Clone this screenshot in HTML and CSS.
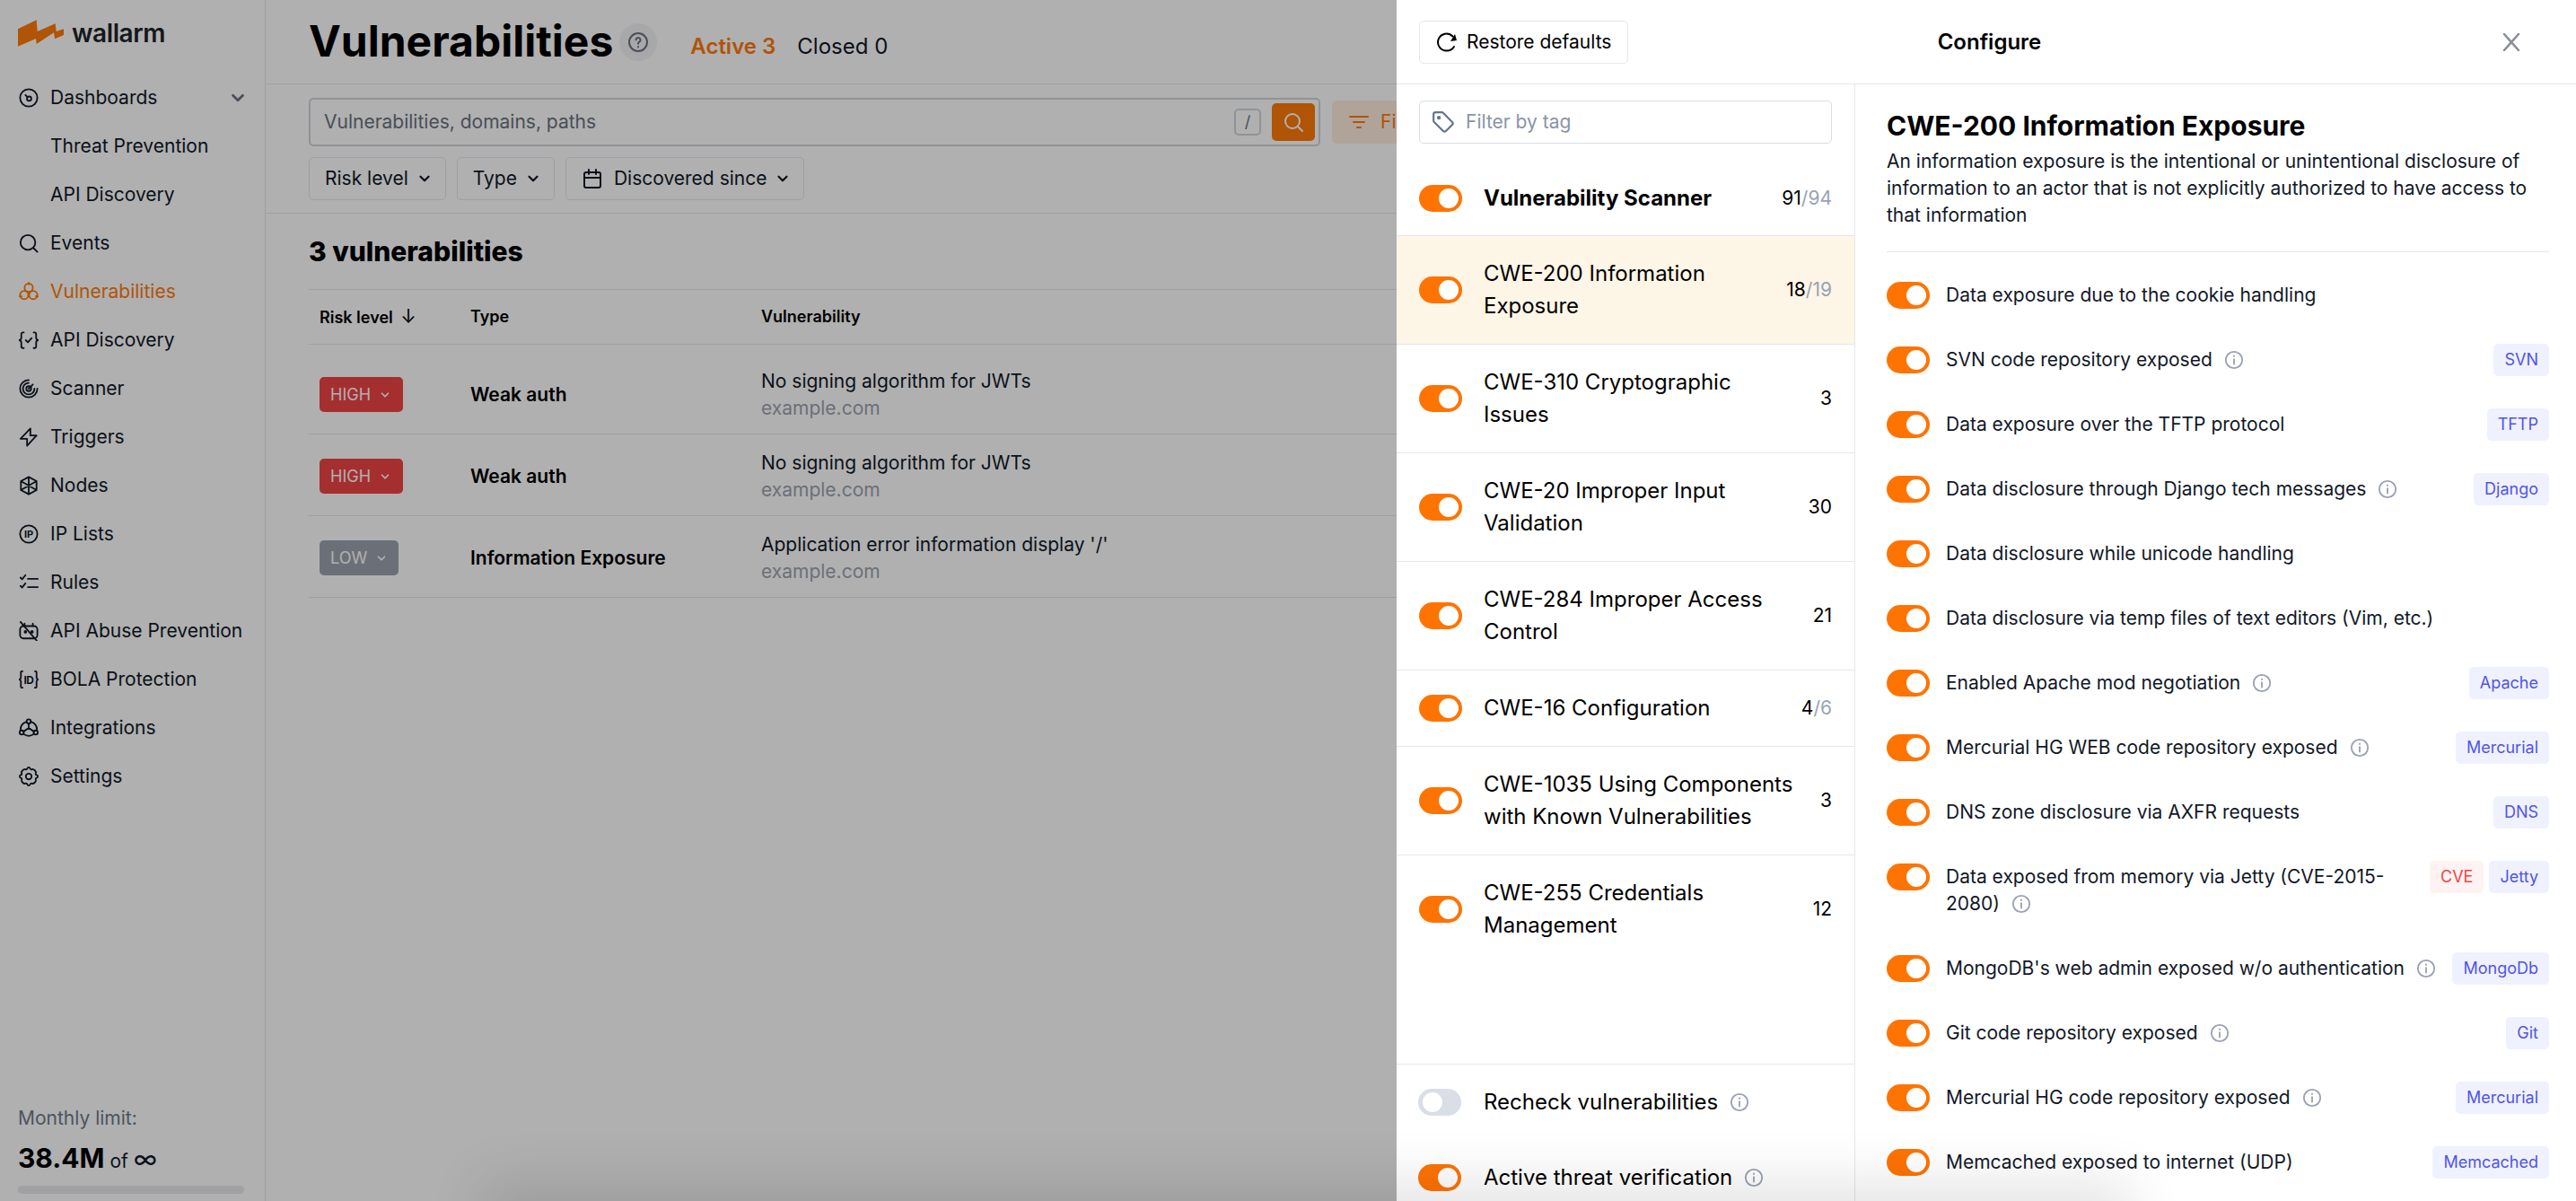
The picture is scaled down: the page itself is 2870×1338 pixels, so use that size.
FILE: index.html
```html
<!DOCTYPE html>
<html lang="en">
<head>
<meta charset="utf-8">
<title>Wallarm - Vulnerabilities</title>
<link rel="stylesheet" href="styles.css">
</head>
<body>
<svg class="sprite" aria-hidden="true">
  <symbol id="i-info" viewBox="0 0 24 24"><circle cx="12" cy="12" r="10"/><path d="M12 11v6M12 7v.6"/></symbol>
  <symbol id="i-chev" viewBox="0 0 24 24"><path d="M6 9l6 6 6-6"/></symbol>
</svg>

<aside class="sidebar">
  <div class="logo">
    <svg class="logo-mark" viewBox="30 30 153 88"><path d="M30 60L92 30L95 68L155 42L158 68L183 60V80L153 93L150 72L92 110L90 92L30 118Z"/></svg>
    <span class="logo-text">wallarm</span>
  </div>
  <nav class="nav">
    <a class="nav-item"><svg class="nav-icon" viewBox="0 0 24 24"><circle cx="12" cy="12" r="10.5"/><circle cx="12.5" cy="13" r="2.6"/><path d="M10.5 11L8 8.5"/></svg>Dashboards<svg class="nav-caret"><use href="#i-chev"/></svg></a>
    <a class="nav-item"><span class="nav-icon"></span>Threat Prevention</a>
    <a class="nav-item"><span class="nav-icon"></span>API Discovery</a>
    <a class="nav-item"><svg class="nav-icon" viewBox="0 0 24 24"><circle cx="11" cy="11" r="9"/><path d="M18 18l4.5 4.5"/></svg>Events</a>
    <a class="nav-item is-active"><svg class="nav-icon" viewBox="0 0 24 24"><circle cx="12" cy="7" r="5"/><circle cx="6.500" cy="16" r="5"/><circle cx="17.500" cy="16" r="5"/><path d="M0.500 17.500h3M20.500 17.500h3M12 1v2"/></svg>Vulnerabilities</a>
    <a class="nav-item"><svg class="nav-icon" viewBox="0 0 24 24"><path d="M6 2.500H5a2 2 0 0 0-2 2V9a3 3 0 0 1-2.500 3A3 3 0 0 1 3 15v4.500a2 2 0 0 0 2 2h1M18 2.500h1a2 2 0 0 1 2 2V9a3 3 0 0 0 2.500 3A3 3 0 0 0 21 15v4.500a2 2 0 0 1-2 2h-1M8.500 12l2.500 2.500 4.500-5"/></svg>API Discovery</a>
    <a class="nav-item"><svg class="nav-icon" viewBox="0 0 24 24"><path d="M22.500 12A10.500 10.500 0 1 1 12 1.500M19 12a7 7 0 1 1-7-7"/><circle cx="12" cy="12" r="3"/><path d="M12 12l5-5"/></svg>Scanner</a>
    <a class="nav-item"><svg class="nav-icon" viewBox="0 0 24 24"><path d="M14 1.500V10h7.500L10 22.500V14H2Z"/></svg>Triggers</a>
    <a class="nav-item"><svg class="nav-icon" viewBox="0 0 24 24"><path d="M12 1.500l9.500 5v11l-9.500 5-9.500-5v-11zM12 1.500v21M2.500 6.500l19 11M21.500 6.500l-19 11"/></svg>Nodes</a>
    <a class="nav-item"><svg class="nav-icon" viewBox="0 0 24 24"><circle cx="12" cy="12" r="10.500"/><text class="icon-text" x="12" y="16.500">IP</text></svg>IP Lists</a>
    <a class="nav-item"><svg class="nav-icon" viewBox="0 0 24 24"><path d="M2 6l2 2 4-5M2 16l2 2 4-5M11 7.500h12M11 17.500h12"/></svg>Rules</a>
    <a class="nav-item"><svg class="nav-icon" viewBox="0 0 24 24"><rect x="1.500" y="6" width="21" height="15" rx="4"/><path d="M7 6V3M17 6V3M2 1l20 23"/><circle cx="8" cy="13" r="1"/><circle cx="16" cy="13" r="1"/></svg>API Abuse Prevention</a>
    <a class="nav-item"><svg class="nav-icon" viewBox="0 0 24 24"><path d="M4.500 2H3.500a1 1 0 0 0-1 1V9a3 3 0 0 1-2 3 3 3 0 0 1 2 3v6a1 1 0 0 0 1 1h1M19.500 2h1a1 1 0 0 1 1 1V9a3 3 0 0 0 2 3 3 3 0 0 0-2 3v6a1 1 0 0 1-1 1h-1"/><text class="icon-text icon-text-sm" x="12" y="17">ID</text></svg>BOLA Protection</a>
    <a class="nav-item"><svg class="nav-icon" viewBox="0 0 24 24"><circle cx="12" cy="4" r="2.500"/><circle cx="3.500" cy="17.500" r="2.500"/><circle cx="20.500" cy="17.500" r="2.500"/><path d="M9.500 4.500a9.500 9.500 0 0 0-7.500 10M14.500 4.500a9.500 9.500 0 0 1 7.500 10M6 19.500a9.500 9.500 0 0 0 12 0M12 6.500V12l-6.500 4.500M12 12l6.500 4.500"/></svg>Integrations</a>
    <a class="nav-item"><svg class="nav-icon" viewBox="0 0 24 24"><path d="M10.325 2.317c.426-1.756 2.924-1.756 3.350 0a1.724 1.724 0 0 0 2.573 1.066c1.543-.94 5.310 2.826 4.370 4.370a1.724 1.724 0 0 0 1.065 2.572c1.756.426 1.756 2.924 0 3.350a1.724 1.724 0 0 0-1.066 2.573c.94 1.543-2.826 5.310-4.370 4.370a1.724 1.724 0 0 0-2.572 1.065c-.426 1.756-2.924 1.756-3.350 0a1.724 1.724 0 0 0-2.573-1.066c-1.543.94-5.310-2.826-4.370-4.370a1.724 1.724 0 0 0-1.065-2.572c-1.756-.426-1.756-2.924 0-3.350a1.724 1.724 0 0 0 1.066-2.573c-.94-1.543 2.826-5.310 4.370-4.370 1 .608 2.296.07 2.572-1.065z"/><circle cx="12" cy="12" r="3.500"/></svg>Settings</a>
  </nav>
  <div class="limit">
    <div class="limit-label">Monthly limit:</div>
    <div class="limit-value"><strong>38.4M</strong> of <span class="limit-inf">∞</span></div>
    <div class="limit-bar"></div>
  </div>
</aside>

<main class="content">
  <header class="page-head">
    <h1 class="page-title">Vulnerabilities</h1>
    <span class="help"><svg viewBox="0 0 24 24"><circle cx="12" cy="12" r="10"/><path d="M9.500 9.500a2.500 2.500 0 1 1 3.800 2.200c-.9.5-1.300 1-1.300 2M12 17v.4"/></svg></span>
    <span class="tab is-active">Active 3</span>
    <span class="tab">Closed 0</span>
  </header>
  <section class="filters">
    <div class="search-row">
      <div class="search">
        <span class="search-text">Vulnerabilities, domains, paths</span>
        <span class="kbd">/</span>
        <span class="search-btn"><svg viewBox="0 0 24 24"><circle cx="11" cy="11" r="8"/><path d="M17 17l5 5"/></svg></span>
      </div>
      <div class="filter-btn"><svg viewBox="0 0 24 24"><path d="M2 6h20M6 12h12M10 18h4"/></svg>Filters</div>
    </div>
    <div class="pill-row">
      <span class="pill">Risk level<svg class="pill-caret"><use href="#i-chev"/></svg></span>
      <span class="pill">Type<svg class="pill-caret"><use href="#i-chev"/></svg></span>
      <span class="pill"><svg class="pill-icon" viewBox="0 0 24 24"><rect x="3" y="5" width="18" height="17" rx="2"/><path d="M3 11h18M8 2v5M16 2v5"/></svg>Discovered since<svg class="pill-caret"><use href="#i-chev"/></svg></span>
    </div>
  </section>
  <section class="results">
    <h2 class="results-title">3 vulnerabilities</h2>
    <div class="table">
      <div class="tr th">
        <div class="td-risk">Risk level <span class="sort">↓</span></div>
        <div>Type</div>
        <div>Vulnerability</div>
      </div>
      <div class="tr tr-first">
        <div class="td-risk"><span class="badge badge-high">HIGH<svg><use href="#i-chev"/></svg></span></div>
        <div class="td-type">Weak auth</div>
        <div class="td-vuln">No signing algorithm for JWTs<span class="td-host">example.com</span></div>
      </div>
      <div class="tr">
        <div class="td-risk"><span class="badge badge-high">HIGH<svg><use href="#i-chev"/></svg></span></div>
        <div class="td-type">Weak auth</div>
        <div class="td-vuln">No signing algorithm for JWTs<span class="td-host">example.com</span></div>
      </div>
      <div class="tr">
        <div class="td-risk"><span class="badge badge-low">LOW<svg><use href="#i-chev"/></svg></span></div>
        <div class="td-type">Information Exposure</div>
        <div class="td-vuln">Application error information display '/'<span class="td-host">example.com</span></div>
      </div>
    </div>
  </section>
</main>

<div class="overlay"></div>

<aside class="drawer">
  <header class="drawer-head">
    <div><button class="restore"><svg viewBox="0 0 24 24"><path d="M18.500 5.500A9.500 9.500 0 1 0 12 21.500a9.500 9.500 0 0 0 8-4.500"/><path class="solid" d="M16 11l7-1-2-7z"/></svg>Restore defaults</button></div>
    <div class="drawer-title">Configure</div>
    <div class="drawer-close"><svg viewBox="0 0 20 20"><path d="M2 1l16 18M18 1L2 19"/></svg></div>
  </header>
  <div class="drawer-body">
    <div class="groups">
      <div class="tag-filter">
        <div class="tag-input"><svg viewBox="0 0 24 24"><path d="M4 2h6.500a2 2 0 0 1 1.400.6l9.300 9.300a2 2 0 0 1 0 2.800l-6.500 6.500a2 2 0 0 1-2.800 0L2.600 11.900A2 2 0 0 1 2 10.500V4a2 2 0 0 1 2-2z"/><circle cx="7.500" cy="7.500" r="1"/></svg>Filter by tag</div>
      </div>
      <div class="group-list">
        <div class="group group-main"><span class="toggle"></span><span class="group-name">Vulnerability Scanner</span><span class="count">91<i>/94</i></span></div>
        <div class="group is-selected"><span class="toggle"></span><span class="group-name">CWE-200 Information Exposure</span><span class="count">18<i>/19</i></span></div>
        <div class="group"><span class="toggle"></span><span class="group-name">CWE-310 Cryptographic Issues</span><span class="count">3</span></div>
        <div class="group"><span class="toggle"></span><span class="group-name">CWE-20 Improper Input Validation</span><span class="count">30</span></div>
        <div class="group"><span class="toggle"></span><span class="group-name">CWE-284 Improper Access Control</span><span class="count">21</span></div>
        <div class="group"><span class="toggle"></span><span class="group-name">CWE-16 Configuration</span><span class="count">4<i>/6</i></span></div>
        <div class="group"><span class="toggle"></span><span class="group-name">CWE-1035 Using Components with Known Vulnerabilities</span><span class="count">3</span></div>
        <div class="group group-last"><span class="toggle"></span><span class="group-name">CWE-255 Credentials Management</span><span class="count">12</span></div>
      </div>
      <div class="group-foot">
        <div class="foot-row"><span class="toggle is-off"></span><span class="foot-name">Recheck vulnerabilities</span><svg class="info"><use href="#i-info"/></svg></div>
        <div class="foot-row"><span class="toggle"></span><span class="foot-name">Active threat verification</span><svg class="info"><use href="#i-info"/></svg></div>
      </div>
    </div>
    <div class="detail">
      <h2 class="detail-title">CWE-200 Information Exposure</h2>
      <p class="detail-desc">An information exposure is the intentional or unintentional disclosure of information to an actor that is not explicitly authorized to have access to that information</p>
      <ul class="checks">
        <li class="check"><span class="toggle"></span><span class="check-name">Data exposure due to the cookie handling</span></li>
        <li class="check"><span class="toggle"></span><span class="check-name">SVN code repository exposed<svg class="info"><use href="#i-info"/></svg></span><span class="tag">SVN</span></li>
        <li class="check"><span class="toggle"></span><span class="check-name">Data exposure over the TFTP protocol</span><span class="tag">TFTP</span></li>
        <li class="check"><span class="toggle"></span><span class="check-name">Data disclosure through Django tech messages<svg class="info"><use href="#i-info"/></svg></span><span class="tag">Django</span></li>
        <li class="check"><span class="toggle"></span><span class="check-name">Data disclosure while unicode handling</span></li>
        <li class="check"><span class="toggle"></span><span class="check-name">Data disclosure via temp files of text editors (Vim, etc.)</span></li>
        <li class="check"><span class="toggle"></span><span class="check-name">Enabled Apache mod negotiation<svg class="info"><use href="#i-info"/></svg></span><span class="tag">Apache</span></li>
        <li class="check"><span class="toggle"></span><span class="check-name">Mercurial HG WEB code repository exposed<svg class="info"><use href="#i-info"/></svg></span><span class="tag">Mercurial</span></li>
        <li class="check"><span class="toggle"></span><span class="check-name">DNS zone disclosure via AXFR requests</span><span class="tag">DNS</span></li>
        <li class="check"><span class="toggle"></span><span class="check-name">Data exposed from memory via Jetty (CVE-2015-2080)<svg class="info"><use href="#i-info"/></svg></span><span class="tag tag-red">CVE</span><span class="tag">Jetty</span></li>
        <li class="check"><span class="toggle"></span><span class="check-name">MongoDB's web admin exposed w/o authentication<svg class="info"><use href="#i-info"/></svg></span><span class="tag">MongoDb</span></li>
        <li class="check"><span class="toggle"></span><span class="check-name">Git code repository exposed<svg class="info"><use href="#i-info"/></svg></span><span class="tag">Git</span></li>
        <li class="check"><span class="toggle"></span><span class="check-name">Mercurial HG code repository exposed<svg class="info"><use href="#i-info"/></svg></span><span class="tag">Mercurial</span></li>
        <li class="check"><span class="toggle"></span><span class="check-name">Memcached exposed to internet (UDP)</span><span class="tag">Memcached</span></li>
      </ul>
    </div>
  </div>
</aside>

<div class="bottom-glow"></div>
</body>
</html>
```

FILE: styles.css
```css
* { box-sizing: border-box; }
html, body { margin: 0; height: 100%; }
body {
  display: flex;
  height: 100vh;
  overflow: hidden;
  background: #fff;
  color: #111827;
  font-family: Inter, "Liberation Sans", sans-serif;
  font-size: 21px;
  line-height: 30px;
}
.sprite { display: none; }
svg { fill: none; stroke: currentColor; stroke-width: 2; stroke-linecap: round; stroke-linejoin: round; flex: none; }

/* Sidebar */
.sidebar {
  flex: none;
  width: 296px;
  display: flex;
  flex-direction: column;
  border-right: 1px solid #e2e4e8;
}
.logo { height: 82px; padding: 0 0 8px 20px; display: flex; align-items: center; gap: 9px; }
.logo-mark { width: 51px; height: 30px; fill: #ff7a0a; stroke: none; }
.logo-text { font-size: 28px; font-weight: 600; letter-spacing: -0.4px; color: #1f2328; line-height: 32px; }
.nav { display: flex; flex-direction: column; }
.nav-item { height: 54px; display: flex; align-items: center; padding-left: 21px; gap: 13px; color: #111827; }
.nav-icon { width: 22px; height: 22px; display: block; }
.nav-caret { width: 22px; height: 22px; margin-left: auto; margin-right: 19px; color: #6b7280; stroke-width: 3; }
.nav-item.is-active { color: #ff7a0a; }
.icon-text { font-family: Inter, sans-serif; font-size: 12px; font-weight: 700; fill: currentColor; stroke: none; text-anchor: middle; }
.icon-text-sm { font-size: 13px; letter-spacing: -0.5px; }
.limit { margin-top: auto; padding: 0 23px 8px 20px; }
.limit-label { color: #6f7a8a; height: 30px; line-height: 30px; }
.limit-value { height: 42px; line-height: 42px; margin-top: 8px; font-size: 21px; }
.limit-value strong { font-size: 30px; font-weight: 700; color: #000; }
.limit-inf { font-size: 28px; }
.limit-bar { height: 9px; margin-top: 10px; border-radius: 5px; background: #e9eaee; }

/* Main */
.content { flex: 1; min-width: 0; overflow: hidden; }
.page-head { height: 94px; padding: 0 0 0 48px; display: flex; align-items: center; border-bottom: 1px solid #e5e7eb; }
.page-title { margin: 0 0 2px; font-size: 48px; line-height: 60px; font-weight: 700; color: #000; }
.help { width: 42px; height: 42px; margin: 0 37px 0 7px; border-radius: 50%; background: #f3f4f6; display: flex; align-items: center; justify-content: center; color: #6b7280; }
.help svg { width: 24px; height: 24px; }
.tab { font-size: 24px; margin: 10px 24px 0 0; color: #111827; }
.tab.is-active { color: #ff7a0a; font-weight: 600; }
.filters { padding: 15px 0 14px 48px; border-bottom: 1px solid #e5e7eb; height: 144px; }
.search-row { display: flex; align-items: center; gap: 13px; width: 1400px; }
.search { flex: none; width: 1127px; height: 54px; display: flex; align-items: center; border: 2px solid #d1d5db; border-radius: 5px; padding: 0 4px 0 15px; }
.search-text { flex: 1; color: #6b7280; }
.kbd { width: 30px; height: 30px; margin-right: 12px; border: 2px solid #d1d5db; border-radius: 5px; display: flex; align-items: center; justify-content: center; font-size: 18px; color: #6b7280; }
.search-btn { width: 48px; height: 42px; background: #ff7a0a; border-radius: 5px; display: flex; align-items: center; justify-content: center; color: #fff; }
.search-btn svg { width: 24px; height: 24px; }
.filter-btn { width: 200px; height: 48px; padding-left: 18px; border-radius: 5px; background: #ffeee0; color: #ff7a0a; display: flex; align-items: center; gap: 12px; }
.filter-btn svg { width: 24px; height: 24px; }
.pill-row { display: flex; gap: 12px; margin-top: 12px; }
.pill { height: 48px; display: flex; align-items: center; padding: 0 14px 0 17px; border: 1px solid #e5e7eb; border-radius: 5px; color: #111827; }
.pill-caret { width: 18px; height: 18px; margin-left: 9px; stroke-width: 3; }
.pill-icon { width: 24px; height: 24px; margin: 0 12px 0 0; }
.results { padding-left: 48px; }
.results-title { margin: 0; height: 84px; line-height: 84px; font-size: 30px; font-weight: 800; color: #000; }
.table { width: 1400px; }
.tr { display: grid; grid-template-columns: 180px 324px 1fr; align-items: center; height: 91px; padding-top: 3px; border-top: 1px solid #e5e7eb; }
.tr:last-child { border-bottom: 1px solid #e5e7eb; height: 92px; }
.tr.th { height: 61px; padding-top: 0; font-size: 18px; font-weight: 600; color: #000; }
.tr-first { height: 100px; padding-top: 12px; }
.td-risk { padding-left: 12px; }
.sort { font-size: 21px; margin-left: 4px; font-weight: 400; }
.td-type { font-weight: 600; color: #000; }
.td-vuln { color: #111827; }
.td-host { display: block; color: #9ca3af; }
.badge { width: 93px; height: 39px; padding-left: 12px; border-radius: 5px; display: inline-flex; align-items: center; gap: 9px; color: #fff; font-size: 18px; line-height: 39px; vertical-align: middle; }
.badge svg { width: 14px; height: 14px; stroke-width: 3; color: #fff; }
.badge-high { background: #ef4444; }
.badge-low { background: #9ca3af; width: 88px; }

/* Overlay */
.overlay { position: fixed; inset: 0; background: rgba(0, 0, 0, 0.31); }

/* Drawer */
.drawer { position: fixed; top: 0; right: 0; bottom: 0; width: 1314px; background: #fff; display: flex; flex-direction: column; color: #000; }
.drawer-head { flex: none; height: 94px; display: grid; grid-template-columns: 1fr auto 1fr; align-items: center; padding: 0 62px 0 25px; border-bottom: 1px solid #e5e7eb; }
.restore { height: 48px; width: 233px; background: #fff; border: 1px solid #e5e7eb; border-radius: 5px; display: flex; align-items: center; gap: 10px; padding: 0 0 0 18px; font: inherit; color: #000; }
.restore svg { width: 24px; height: 24px; }
.restore .solid { fill: currentColor; stroke: none; }
.drawer-title { font-size: 24px; font-weight: 600; padding-left: 44px; }
.drawer-close { color: #8b8f96; display: flex; justify-content: flex-end; }
.drawer-close svg { width: 20px; height: 20px; stroke-width: 2.500; }
.drawer-body { flex: 1; min-height: 0; display: flex; }
.groups { flex: none; width: 511px; border-right: 1px solid #e5e7eb; display: flex; flex-direction: column; }
.tag-filter { flex: none; padding: 18px 25px 19px; }
.tag-input { height: 48px; border: 1px solid #d8dde6; border-radius: 5px; display: flex; align-items: center; padding-left: 13px; gap: 12px; color: #8a94a6; }
.tag-input svg { width: 26px; height: 26px; color: #64748b; }
.group-list { flex: 1; min-height: 0; overflow: hidden; }
.group { display: flex; align-items: center; padding: 24px 25px; min-height: 85px; border-bottom: 1px solid #e5e7eb; }
.group-last { border-bottom: 0; }
.group-main { height: 84px; padding-top: 0; padding-bottom: 0; min-height: 0; }
.group-main .group-name { font-weight: 700; }
.group-name { width: 345px; margin-left: 24px; font-size: 24px; line-height: 36px; }
.group.is-selected { background: #fdf5e6; }
.count { margin-left: auto; }
.count i { font-style: normal; color: #98a2b3; }
.toggle { flex: none; position: relative; display: block; width: 48px; height: 30px; border-radius: 15px; background: #ff7300; }
.toggle::after { content: ""; position: absolute; top: 4px; right: 4px; width: 22px; height: 22px; border-radius: 50%; background: #fff; }
.toggle.is-off { background: #d9dee7; }
.toggle.is-off::after { right: auto; left: 5px; }
.group-foot { flex: none; height: 153px; border-top: 1px solid #e5e7eb; overflow: hidden; padding-left: 24px; }
.foot-row { height: 84px; display: flex; align-items: center; }
.foot-name { margin-left: 25px; font-size: 24px; }
.info { width: 22px; height: 22px; margin-left: 13px; vertical-align: -4px; color: #98a2b3; }
.detail { flex: 1; min-width: 0; overflow: hidden; padding: 28px 30px 0 35px; }
.detail-title { margin: 0 0 7px; font-size: 30px; line-height: 36px; font-weight: 700; }
.detail-desc { margin: 0; padding-bottom: 25px; border-bottom: 1px solid #e5e7eb; color: #111827; }
.checks { list-style: none; margin: 30px 0 0; padding: 0; display: flex; flex-direction: column; gap: 36px; }
.check { display: flex; align-items: flex-start; min-height: 36px; }
.check .toggle { margin-top: 3px; }
.check-name { flex: 1; min-width: 0; margin: 3px 14px 3px 18px; color: #111827; }
.tag { flex: none; height: 36px; line-height: 36px; padding: 0 12px; border-radius: 5px; background: #f0f1ff; color: #4f55e8; font-size: 18px; }
.tag + .tag { margin-left: 6px; }
.tag-red { background: #fef2f2; color: #ef4444; }

/* Bottom fade */
.bottom-glow { position: fixed; left: 560px; right: 520px; bottom: -40px; height: 40px; box-shadow: 0 0 60px 24px rgba(0, 0, 0, 0.1); pointer-events: none; }
```
